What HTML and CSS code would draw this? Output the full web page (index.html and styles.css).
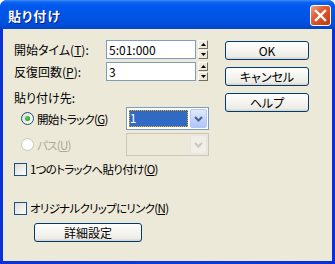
FILE: index.html
```html
<!DOCTYPE html>
<html lang="ja">
<head>
    <meta charset="UTF-8">
    <title>貼り付け</title>
    <link rel="stylesheet" href="styles.css">
</head>
<body>
    <div class="window">
        <div class="titlebar">
            <span class="title">貼り付け</span>
            <div class="close-button">
                <svg width="13" height="13" viewBox="0 0 13 13">
                    <path d="M2 2 L11 11 M11 2 L2 11" stroke="#fff" stroke-width="2.4" stroke-linecap="square"/>
                </svg>
            </div>
        </div>

        <div class="client">
            <div class="form">
                <div class="field-row">
                    <label class="field-label">開始タイム(<u>T</u>):</label>
                    <div class="text-box">5:01:000</div>
                    <div class="spinner">
                        <div class="spin-btn"><svg width="5" height="3" viewBox="0 0 5 3"><path d="M0 3 L2.5 0 L5 3 Z" fill="#000"/></svg></div>
                        <div class="spin-btn"><svg width="5" height="3" viewBox="0 0 5 3"><path d="M0 0 L2.5 3 L5 0 Z" fill="#000"/></svg></div>
                    </div>
                </div>
                <div class="field-row second">
                    <label class="field-label">反復回数(<u>P</u>):</label>
                    <div class="text-box">3</div>
                    <div class="spinner">
                        <div class="spin-btn"><svg width="5" height="3" viewBox="0 0 5 3"><path d="M0 3 L2.5 0 L5 3 Z" fill="#000"/></svg></div>
                        <div class="spin-btn"><svg width="5" height="3" viewBox="0 0 5 3"><path d="M0 0 L2.5 3 L5 0 Z" fill="#000"/></svg></div>
                    </div>
                </div>

                <div class="group-label">貼り付け先:</div>

                <div class="radio-row">
                    <div class="radio-choice">
                        <span class="radio checked"></span>
                        <span class="option-text">開始トラック(<u>G</u>)</span>
                    </div>
                    <div class="combo">
                        <div class="combo-value selected">1</div>
                        <div class="combo-btn">
                            <svg width="9" height="6" viewBox="0 0 9 6"><path d="M1 1 L4.5 4.5 L8 1" fill="none" stroke="#4d6185" stroke-width="2"/></svg>
                        </div>
                    </div>
                </div>
                <div class="radio-row second">
                    <div class="radio-choice disabled">
                        <span class="radio"></span>
                        <span class="option-text">パス(<u>U</u>)</span>
                    </div>
                    <div class="combo disabled">
                        <div class="combo-value"></div>
                        <div class="combo-btn">
                            <svg width="9" height="6" viewBox="0 0 9 6"><path d="M1 1 L4.5 4.5 L8 1" fill="none" stroke="#c9c7ba" stroke-width="2"/></svg>
                        </div>
                    </div>
                </div>

                <div class="check-row first">
                    <span class="checkbox"></span>
                    <span class="option-text">1つのトラックへ貼り付け(<u>O</u>)</span>
                </div>
                <div class="check-row link">
                    <span class="checkbox"></span>
                    <span class="option-text">オリジナルクリップにリンク(<u>N</u>)</span>
                </div>

                <div class="button wide">詳細設定</div>
            </div>

            <div class="actions">
                <div class="button">OK</div>
                <div class="button">キャンセル</div>
                <div class="button">ヘルプ</div>
            </div>
        </div>
    </div>
</body>
</html>
```

FILE: styles.css
```css
body {
    margin: 0;
    background: #fff;
    font-family: "Noto Sans CJK JP", sans-serif;
    font-size: 12px;
    font-feature-settings: "palt";
    color: #000;
}

.window {
    width: 335px;
    height: 264px;
    display: flex;
    flex-direction: column;
    background: linear-gradient(90deg, #0831d9, #0a3be0 50%, #0831d9);
    border-radius: 7px 7px 0 0;
    overflow: hidden;
}

.titlebar {
    height: 29px;
    flex: none;
    display: flex;
    align-items: center;
    justify-content: space-between;
    padding: 0 4px 0 8px;
    background: linear-gradient(#3d8ef6 0%, #0d63ef 8%, #0058ee 20%, #0055e5 55%, #0050dc 80%, #0144c9 100%);
}

.title {
    color: #fff;
    font-weight: bold;
    font-size: 13px;
    letter-spacing: 1px;
    text-shadow: 1px 1px 0 #0a1883;
    margin-top: 2px;
}

.close-button {
    width: 19px;
    height: 19px;
    border: 1px solid #fff;
    border-radius: 3px;
    display: flex;
    align-items: center;
    justify-content: center;
    background: linear-gradient(135deg, #f0a487 0%, #e2603b 35%, #d84a21 65%, #c03a12 100%);
    margin-top: 2px;
}

.client {
    flex: 1;
    margin: 0 3px 3px 3px;
    background: #ece9d8;
    display: flex;
    padding: 11px 0 0 11px;
}

.form {
    width: 195px;
    display: flex;
    flex-direction: column;
}

.field-row {
    display: flex;
    align-items: center;
    height: 19px;
}

.field-row.second {
    margin-top: 3px;
}

.field-label {
    width: 92px;
}

.text-box {
    width: 86px;
    height: 17px;
    line-height: 17px;
    border: 1px solid #7f9db9;
    background: #fff;
    padding-left: 2px;
}

.spinner {
    margin-left: 2px;
    display: flex;
    flex-direction: column;
    gap: 1px;
}

.spin-btn {
    width: 8px;
    height: 7px;
    border: 1px solid;
    border-color: #fff #716f64 #716f64 #fff;
    background: #ece9d8;
    display: flex;
    align-items: center;
    justify-content: center;
}

.group-label {
    margin-top: 9px;
    height: 15px;
    line-height: 15px;
}

.radio-row {
    display: flex;
    align-items: center;
    margin-top: 2px;
    padding-left: 7px;
}

.radio-row.second {
    margin-top: 3px;
}

.radio-choice {
    width: 106px;
    display: flex;
    align-items: center;
    gap: 3px;
}

.radio-choice.disabled {
    color: #aca899;
}

.option-text {
    font-size: 11.5px;
    letter-spacing: -0.7px;
}

.radio {
    width: 11px;
    height: 11px;
    border: 1px solid #1c5180;
    border-radius: 50%;
    background: linear-gradient(135deg, #dcdcd5, #fff);
    display: flex;
    align-items: center;
    justify-content: center;
}

.radio.checked::after {
    content: "";
    width: 5px;
    height: 5px;
    border-radius: 50%;
    background: radial-gradient(circle at 40% 40%, #5cd65c, #21a121 70%);
}

.disabled .radio {
    border-color: #cac8bb;
    background: #fff;
}

.combo {
    width: 80px;
    height: 19px;
    border: 1px solid #7f9db9;
    background: #fff;
    display: flex;
    padding: 1px;
}

.combo.disabled {
    border-color: #c9c7ba;
    background: #ece9d8;
}

.combo-value {
    flex: 1;
    margin: 1px 2px 1px 1px;
    color: #fff;
    line-height: 15px;
    padding-left: 1px;
}

.combo-value.selected {
    background: #316ac5;
    outline: 1px dotted #f4b300;
    outline-offset: -1px;
}

.combo-btn {
    width: 15px;
    border: 1px solid #b4c8f6;
    border-radius: 2px;
    background: linear-gradient(#e2eafe, #c0d2fb 60%, #b0c6f8);
    display: flex;
    align-items: center;
    justify-content: center;
}

.combo.disabled .combo-btn {
    border-color: #e8e6dc;
    background: #f0efe7;
}

.check-row {
    display: flex;
    align-items: center;
    gap: 3px;
    height: 16px;
}

.check-row.first {
    margin-top: 5px;
}

.check-row.link {
    margin-top: 23px;
}

.checkbox {
    width: 11px;
    height: 11px;
    border: 1px solid #1c5180;
    background: linear-gradient(135deg, #dcdcd7, #fff);
}

.button {
    width: 82px;
    height: 17px;
    line-height: 17px;
    text-align: center;
    border: 1px solid #003c74;
    border-radius: 3px;
    background: linear-gradient(#fff, #f5f4ef 50%, #ecebe6 85%, #d6d0c5);
}

.button.wide {
    width: 106px;
    margin: 7px 0 0 20px;
}

.actions {
    margin-left: 16px;
    margin-top: 1px;
    display: flex;
    flex-direction: column;
    gap: 7px;
}
```
